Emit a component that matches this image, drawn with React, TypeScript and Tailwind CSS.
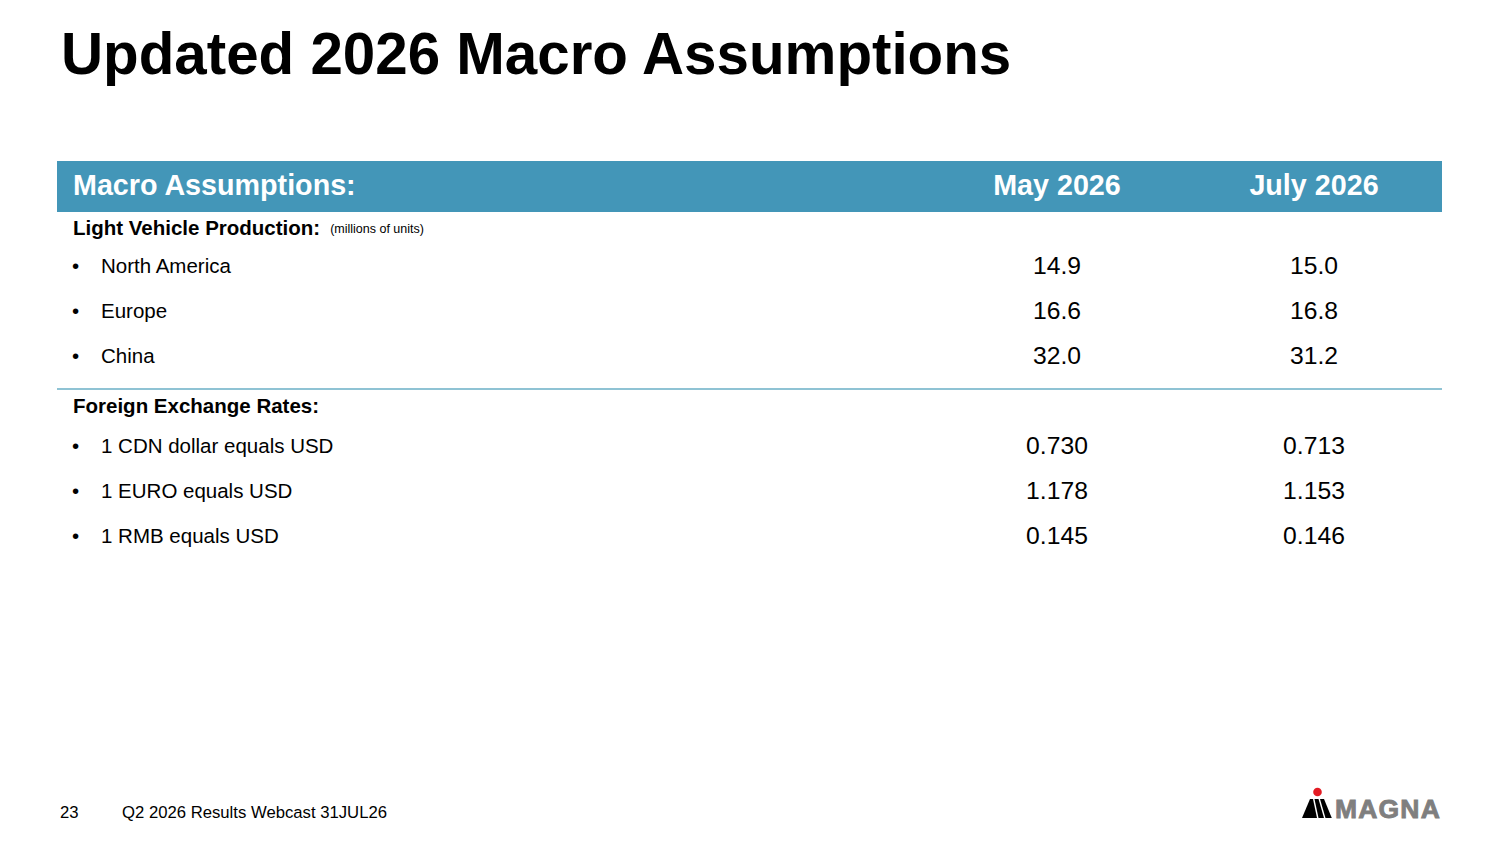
import React from "react";

const rows1 = [
  { label: "North America", a: "14.9", b: "15.0" },
  { label: "Europe", a: "16.6", b: "16.8" },
  { label: "China", a: "32.0", b: "31.2" },
];
const rows2 = [
  { label: "1 CDN dollar equals USD", a: "0.730", b: "0.713" },
  { label: "1 EURO equals USD", a: "1.178", b: "1.153" },
  { label: "1 RMB equals USD", a: "0.145", b: "0.146" },
];

function Row({ label, a, b }: { label: string; a: string; b: string }) {
  return (
    <div className="grid grid-cols-[871px_258px_256px] h-[45px] items-center pt-[1px]">
      <div className="flex items-center pl-[15px] text-[20.5px] leading-none">
        <span className="w-[29px]">•</span>
        <span>{label}</span>
      </div>
      <div className="text-center text-[24.7px] leading-none">{a}</div>
      <div className="text-center text-[24.7px] leading-none">{b}</div>
    </div>
  );
}

function Logo() {
  return (
    <div className="flex items-end gap-[3px]">
      <svg width="30" height="34" viewBox="0 0 30 34" className="mb-[3px]">
        <circle cx="15.5" cy="7" r="4.3" fill="#e31b23" />
        <polygon points="0,33 8,14 11,14 15,33" fill="#000" />
        <polygon points="12.5,14 16.5,14 22,33 16.5,33" fill="#000" />
        <polygon points="18,14 22,14 29.8,33 23.5,33" fill="#000" />
      </svg>
      <span className="text-[26.5px] leading-none font-bold text-[#7f7f7f] tracking-[1.2px] [-webkit-text-stroke:0.9px_#7f7f7f]">
        MAGNA
      </span>
    </div>
  );
}

export default function App() {
  return (
    <div
      className="w-[1500px] h-[844px] bg-white text-black relative flex flex-col"
      style={{ fontFamily: '"Liberation Sans", Arial, sans-serif' }}
    >
      <div className="pt-[25px] pl-[61px] text-[58.3px] leading-[58px] font-bold">
        Updated 2026 Macro Assumptions
      </div>

      <div className="mt-[78px] ml-[57px] w-[1385px]">
        <div className="grid grid-cols-[871px_258px_256px] h-[51px] items-center bg-[#4396b8] text-white font-bold text-[28.7px] leading-none pb-[3px]">
          <div className="pl-[16px]">Macro Assumptions:</div>
          <div className="text-center">May 2026</div>
          <div className="text-center">July 2026</div>
        </div>

        <div className="h-[31px] flex items-center pl-[16px] pt-[1px]">
          <span className="font-bold text-[20.5px] leading-none">Light Vehicle Production:</span>
          <span className="text-[12.5px] leading-none ml-[10px] mt-[3px]">(millions of units)</span>
        </div>
        {rows1.map((r) => (
          <Row key={r.label} {...r} />
        ))}
        <div className="h-[10px]" />
        <div className="h-[1.5px] bg-[#8fc3d4]" />
        <div className="h-[34px] flex items-center pl-[16px]">
          <span className="font-bold text-[20.5px] leading-none">Foreign Exchange Rates:</span>
        </div>
        {rows2.map((r) => (
          <Row key={r.label} {...r} />
        ))}
      </div>

      <div className="mt-auto mb-[22px] flex items-end justify-between pl-[60px] pr-[59px]">
        <div className="flex text-[16.7px] leading-none">
          <span className="w-[62px]">23</span>
          <span>Q2 2026 Results Webcast 31JUL26</span>
        </div>
        <Logo />
      </div>
    </div>
  );
}
